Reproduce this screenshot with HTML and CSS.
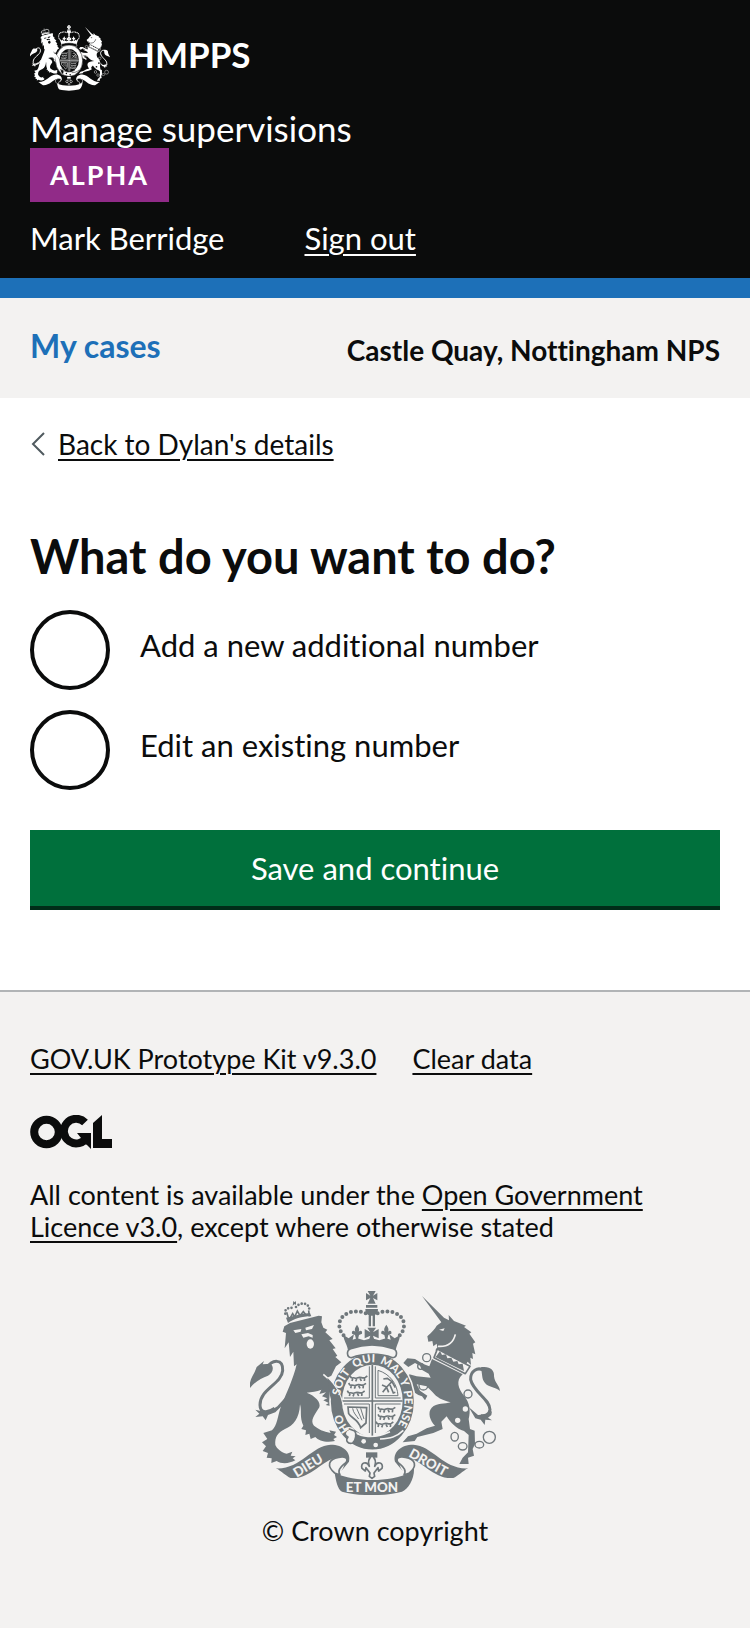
FILE: index.html
```html
<!DOCTYPE html>
<html lang="en">
<head>
<meta charset="utf-8">
<meta name="viewport" content="width=device-width, initial-scale=1">
<title>What do you want to do? - Manage supervisions</title>
<link rel="stylesheet" href="styles.css">
</head>
<body>
<svg class="sprite" aria-hidden="true">
  <defs>
    <g id="ribbon-side">
      <path class="ink" d="M108 568C180 572 215 500 272 497C310 497 334 520 327 548L304 576C322 550 314 532 290 536C248 542 210 602 152 597C138 592 124 576 108 568Z"/>
      <path class="outline" d="M296 535C264 540 260 562 284 582L300 588C290 570 306 562 318 550C326 540 316 530 296 535Z"/>
    </g>
    <g id="crown-half">
      <path class="pearls" d="M377 103C342 88 298 104 298 138C298 152 304 162 314 172"/>
      <path class="ink" d="M351 137C358 147 359 152 356 158C362 152 368 156 366 164L357 168L354 180H348L345 168L336 164C334 156 340 152 346 158C343 152 344 147 351 137Z"/>
    </g>
    <g id="passant">
      <path class="line bold" d="M0 4C8-2 12 8 20 2C28-2 34 6 42 1L48 -3M4 5L2 12M16 6L13 13M26 4L30 12M40 4L39 12M0 3L-4 -4"/>
    </g>
    <symbol id="crest" viewBox="30 36 750 612">
      <!-- royal crown -->
      <path class="ink" d="M383 36H407L399 50L412 42V64L399 57L407 74H383L391 57L378 64V42L391 50Z"/>
      <path class="ink" d="M378 78H412V86H378ZM376 90H414C414 106 404 110 395 110S376 106 376 90ZM386 108H393V142H386ZM398 108H405V142H398Z"/>
      <path class="ink" d="M382 146H408L399 160L416 150V178L399 170L404 186H386L391 170L374 178V150L391 160Z"/>
      <use href="#crown-half"/>
      <use href="#crown-half" transform="matrix(-1 0 0 1 790 0)"/>
      <path class="ink" d="M310 168L326 178L342 166L338 182L352 178L372 184L395 178L418 184L438 178L452 182L448 166L464 178L480 168C478 188 472 192 467 214C420 200 370 200 324 214C320 192 312 188 310 168Z"/>
      <!-- lion -->
      <path class="ink" d="M133 142L150 132L236 110L246 112L244 130L250 146L262 152L256 160L278 180L268 184L287 208L278 210L292 230L286 234L304 250L288 262L274 290L262 296C288 320 302 345 306 372L300 393L288 384L284 394L270 390L275 382L257 378L266 372L250 364L262 358L246 352L258 340L238 345L244 332C230 338 215 338 200 341C225 350 244 370 238 385C222 410 210 425 222 440C234 450 250 458 272 462L268 454L288 458L282 468L291 474L280 480L285 486C260 492 236 486 226 474L212 480L208 464L196 468L198 454L184 450L190 440C178 415 186 395 180 376C178 420 160 440 135 450C112 462 104 475 106 498C110 508 125 522 140 524L157 518L152 530L167 532L158 538L166 544C148 554 125 556 110 546L94 552L95 538L80 536L84 522L68 516L78 502L66 490L82 480L70 462L96 454C112 440 112 415 122 385C140 340 160 300 170 256L162 262L160 218L150 234L146 190L134 208L138 162L128 158Z"/>
      <path class="ground" d="M160 154L184 150L182 158L166 162ZM196 146L222 138L216 150L198 154ZM184 166L204 162L218 168L218 176L206 172L190 176Z"/>
      <ellipse class="ground" cx="211" cy="195" rx="11" ry="14"/>
      <path class="gap" d="M250 286C275 306 292 325 300 352"/>
      <path class="ink" d="M30 327C26 300 42 290 50 264L72 246L68 256L92 254C104 264 98 284 84 290C64 298 44 308 30 327ZM46 392L62 396L80 402L112 382L135 356L134 372L106 400L84 408L77 424L68 412L46 414L58 404Z"/>
      <path class="tail" d="M80 268C96 240 130 238 128 275C125 315 60 330 60 378C60 404 84 402 104 388"/>
      <path class="line bold" d="M140 100L148 126M206 94L208 112M150 118L158 104L164 114L172 96L180 110L190 98L198 108"/>
      <path class="pearls small" d="M136 104C132 88 150 84 162 88M168 84C176 72 206 66 208 92"/>
      <path class="ink" d="M160 66L164 70L168 66V78L164 75L158 80ZM138 116C160 112 184 104 210 102L214 112C186 112 160 120 144 132Z"/>
      <!-- unicorn -->
      <path class="ink" d="M546 51L612 116L627 124L626 108L642 126L678 140L672 144L694 160L688 164L706 190L699 194L706 226L697 222L699 240L691 236L693 258L683 248L674 262L586 214L592 205L590 194L580 202L577 186L565 188L562 172C575 160 585 150 590 140L604 130Z"/>
      <path class="gap" d="M594 202C622 204 640 192 646 166"/>
      <path class="ground" d="M597 152L614 148L610 156Z"/>
      <path class="outline" d="M592 210L690 262L676 284L582 236Z"/>
      <path class="ink" d="M590 230L600 216L606 228L618 226L622 238L634 236L640 248L652 246L656 256L668 254L672 276L586 234Z"/>
      <path class="ink" d="M576 240L668 286C646 305 655 330 672 350C690 372 692 395 686 420L690 450L704 455L705 495L698 510L702 530L684 536L686 555H658L668 536L684 520L686 468L672 456C650 450 630 430 620 412L604 428L608 450L580 462L532 474L524 486L488 490L504 472L530 464L560 448L585 440C570 425 562 400 575 386C590 372 615 375 632 370C606 364 590 355 578 340L560 322L530 316L540 335L562 350L555 364L546 352L535 348L522 340L505 305L508 286L530 292L572 296L566 284L545 272L540 260L525 252L505 264L490 252L502 238L525 240L548 254L568 262Z"/>
      <path class="ink" d="M722 265C748 260 764 272 762 292C764 312 778 318 780 336C765 322 745 326 735 312C724 300 728 285 722 265ZM686 384L714 408L744 406L756 396L754 408L744 416L756 424L736 422L734 438L722 422L706 418Z"/>
      <path class="tail" d="M738 278C712 258 690 278 692 302C700 340 750 360 750 392C748 408 734 412 722 410"/>
      <g class="chain">
        <circle cx="560" cy="236" r="12"/><circle cx="542" cy="262" r="9"/><circle cx="550" cy="320" r="13"/>
        <circle cx="684" cy="345" r="12"/><ellipse cx="644" cy="473" rx="11" ry="13"/>
        <ellipse cx="668" cy="502" rx="13" ry="11"/><ellipse cx="718" cy="497" rx="13" ry="10"/><circle cx="748" cy="475" r="18"/>
      </g>
      <circle class="ground" cx="676" cy="390" r="8"/><circle class="ground" cx="653" cy="424" r="8"/>
      <!-- garter and shield -->
      <ellipse class="ring" cx="397" cy="367" rx="127" ry="147"/>
      <ellipse class="ground" cx="397" cy="365" rx="91" ry="108"/>
      <path class="line bold" d="M397 258V472M306 366H488"/>
      <path class="line" d="M388 262V357H312M406 262V357H482M388 462V375H312M406 462V375H482"/>
      <use href="#passant" x="334" y="294"/><use href="#passant" x="330" y="316"/><use href="#passant" x="326" y="339"/>
      <use href="#passant" x="418" y="388"/><use href="#passant" x="418" y="410"/><use href="#passant" x="412" y="432"/>
      <path class="line" d="M414 274V350H474C472 315 450 285 414 274Z"/>
      <path class="line bold" d="M428 340L440 324L426 318M440 324L456 308L442 298L430 300M456 308L466 326M450 318L460 342L466 340M440 326L446 340"/>
      <path class="line bold" d="M324 384L380 386L378 432L362 446C354 420 334 418 326 404Z"/>
      <path class="line" d="M338 388C340 402 348 408 356 420M350 388L366 424M362 388L372 420"/>
      <path class="gap" d="M312 452C326 442 340 448 342 458C365 472 395 482 450 458M420 480C450 478 470 474 490 454"/>
      <path class="outline" d="M328 450C312 456 312 470 324 474C316 484 322 496 338 492C348 484 350 462 344 456Z"/>
      <circle class="ground" cx="371" cy="487" r="7"/><circle class="ground" cx="407" cy="498" r="7"/>
      <path class="outline" d="M332 209C372 195 420 195 460 209C474 214 472 236 458 236C420 222 372 222 334 236C320 236 318 214 332 209Z"/>
      <path class="gap" d="M262 296C286 318 302 345 308 376"/>
      <path class="ink" d="M262 296C286 320 302 345 306 372L298 396L288 384L280 388L270 350Z"/>
      <!-- ribbon -->
      <use href="#ribbon-side"/>
      <use href="#ribbon-side" transform="matrix(-1 0 0 1 792 0)"/>
      <path class="ink" d="M284 582C345 610 450 610 508 582L522 566C524 600 504 632 486 638C430 652 360 652 306 638C292 630 288 605 284 582Z"/>
      <path class="ink" d="M378 520H412V536H378Z"/>
      <path class="outline" d="M396 530C410 542 408 552 404 562C412 544 432 552 426 568L416 576L414 566L402 582L404 592L396 598L388 592L390 582L378 566L376 576L366 568C360 552 380 544 388 562C384 552 382 542 396 530Z"/>
    </symbol>
  </defs>
</svg>

<header class="header">
  <a class="brand" href="#">
    <svg class="brand-crest" aria-hidden="true"><use href="#crest"/></svg>
    <span>HMPPS</span>
  </a>
  <a class="service" href="#">Manage supervisions</a>
  <strong class="tag">ALPHA</strong>
  <div class="account">
    <span>Mark Berridge</span>
    <a href="#">Sign out</a>
  </div>
</header>

<nav class="subnav" aria-label="Primary">
  <a class="subnav-link" href="#">My cases</a>
  <span class="location">Castle Quay, Nottingham NPS</span>
</nav>

<main class="main">
  <a class="back" href="#">
    <svg class="chevron" viewBox="0 0 14 24" aria-hidden="true"><path d="M13 1L2 12L13 23"/></svg>
    <span>Back to Dylan's details</span>
  </a>
  <form class="form" action="#">
    <fieldset class="choices">
      <legend>What do you want to do?</legend>
      <div class="choice">
        <input type="radio" name="action" id="add" value="add">
        <label for="add">Add a new additional number</label>
      </div>
      <div class="choice">
        <input type="radio" name="action" id="edit" value="edit">
        <label for="edit">Edit an existing number</label>
      </div>
    </fieldset>
    <button class="submit" type="submit">Save and continue</button>
  </form>
</main>

<footer class="footer">
  <div class="footer-links">
    <a href="#">GOV.UK Prototype Kit v9.3.0</a>
    <a href="#">Clear data</a>
  </div>
  <svg class="ogl" viewBox="0 0 82 34" role="img" aria-label="Open Government Licence">
    <circle cx="16.5" cy="17" r="12.3"/>
    <path d="M55 7.5A12.3 12.3 0 1 0 57 22"/>
    <path class="solid" d="M47 18H61V34L57 30L50 26L51 23Z"/>
    <path class="solid" d="M63 8L72 0V24H82V33H63Z"/>
  </svg>
  <p class="licence">All content is available under the <a href="#">Open Government Licence v3.0</a>, except where otherwise stated</p>
  <a class="copyright" href="#">
    <svg class="arms" viewBox="30 36 750 612" aria-hidden="true">
      <defs>
        <path id="motto" d="M300 382A97 117 0 1 1 436 474"/>
        <path id="motto-start" d="M330 454A97 117 0 0 1 300 367"/>
      </defs>
      <use href="#crest" x="30" y="36" width="750" height="612"/>
      <g class="motto">
        <text><textPath href="#motto-start" startOffset="2">HO</textPath></text>
        <text><textPath href="#motto" startOffset="32">SOIT</textPath></text>
        <text><textPath href="#motto" startOffset="128">QUI</textPath></text>
        <text><textPath href="#motto" startOffset="206">MAL</textPath></text>
        <text><textPath href="#motto" startOffset="286">Y</textPath></text>
        <text><textPath href="#motto" startOffset="320">PENSE</textPath></text>
      </g>
      <g class="motto large">
        <text transform="translate(170 596) rotate(-31)">DIEU</text>
        <text transform="translate(504 532) rotate(29)">DROIT</text>
        <text x="396" y="639" text-anchor="middle">ET MON</text>
      </g>
    </svg>
    <span>© Crown copyright</span>
  </a>
</footer>
</body>
</html>
```

FILE: styles.css
```css
* {
  box-sizing: border-box;
}

body {
  --ground: #f3f2f1;
  margin: 0;
  min-height: 100vh;
  display: flex;
  flex-direction: column;
  background: #f3f2f1;
  color: #0b0c0c;
  font-family: Lato, "Noto Sans", sans-serif;
  font-size: 31px;
  font-variant-ligatures: none;
  line-height: 40px;
}

a {
  color: inherit;
  text-decoration-thickness: 2px;
  text-underline-offset: 4px;
}

.sprite {
  position: absolute;
  width: 0;
  height: 0;
}

/* Crest artwork: drawn in the text colour over --ground */
.ink { fill: currentColor; }
.ground { fill: var(--ground); }
.ring { fill: currentColor; stroke: var(--ground); stroke-width: 5; }
.outline { fill: var(--ground); stroke: currentColor; stroke-width: 5; stroke-linejoin: round; }
.line { fill: none; stroke: currentColor; stroke-width: 3; }
.line.bold { stroke-width: 5; }
.gap { fill: none; stroke: var(--ground); stroke-width: 5; }
.tail { fill: none; stroke: currentColor; stroke-width: 9; }
.pearls { fill: none; stroke: currentColor; stroke-width: 12; stroke-linecap: round; stroke-dasharray: 0 15; }
.pearls.small { stroke-width: 8; stroke-dasharray: 0 10; }
.chain { fill: none; stroke: currentColor; stroke-width: 4; }

.header {
  --ground: #0b0c0c;
  display: flex;
  flex-direction: column;
  align-items: flex-start;
  padding: 24px 30px 20px;
  border-bottom: 20px solid #1d70b8;
  background: #0b0c0c;
  color: #fff;
}

.brand {
  display: flex;
  align-items: flex-start;
  gap: 18px;
  margin-bottom: 16px;
  font-size: 35px;
  font-weight: 700;
  line-height: 60px;
  text-decoration: none;
}

.brand-crest {
  width: 80px;
  height: 68px;
}

.service {
  font-size: 35px;
  text-decoration: none;
}

.tag {
  padding: 7px 20px;
  background: #912b88;
  font-size: 27px;
  font-weight: 700;
  letter-spacing: 2px;
}

.account {
  display: flex;
  gap: 80px;
  margin-top: 16px;
}

.subnav {
  display: flex;
  justify-content: space-between;
  padding: 28px 30px;
  font-weight: 700;
}

.subnav-link {
  color: #1d70b8;
  font-size: 32px;
  text-decoration: none;
}

.location {
  padding-top: 4px;
  font-size: 28px;
}

.main {
  padding: 30px 30px 80px;
  background: #fff;
}

.back {
  display: flex;
  align-items: center;
  gap: 12px;
  width: fit-content;
  font-size: 28px;
  line-height: 32px;
  text-decoration: none;
}

.back span {
  text-decoration: underline;
  text-decoration-thickness: 2px;
}

.chevron {
  width: 16px;
  height: 24px;
  fill: none;
  stroke: #505a5f;
  stroke-width: 2;
}

.form {
  margin-top: 68px;
}

.choices {
  display: grid;
  gap: 20px;
  margin: 0;
  padding: 0;
  border: 0;
}

.choices legend {
  margin-bottom: 26px;
  padding: 0;
  font-size: 47px;
  font-weight: 700;
  line-height: 56px;
}

.choice {
  display: flex;
  gap: 30px;
}

.choice input {
  appearance: none;
  flex: none;
  width: 80px;
  height: 80px;
  margin: 0;
  border: 4px solid #0b0c0c;
  border-radius: 50%;
  background: #fff;
}

.choice input:checked {
  background: radial-gradient(#0b0c0c 20px, #fff 21px);
}

.choice label {
  padding-top: 15px;
}

.submit {
  display: block;
  width: 100%;
  margin-top: 40px;
  padding: 20px;
  border: 0;
  border-bottom: 4px solid #002d18;
  background: #00703c;
  color: #fff;
  font: inherit;
  line-height: 36px;
}

.footer {
  flex: 1;
  padding: 51px 30px;
  border-top: 2px solid #b1b4b6;
  font-size: 27px;
  line-height: 32px;
}

.footer-links {
  display: flex;
  gap: 36px;
}

.ogl {
  display: block;
  width: 82px;
  height: 34px;
  margin: 40px 0 30px;
  fill: none;
  stroke: #0b0c0c;
  stroke-width: 8;
}

.solid {
  fill: #0b0c0c;
  stroke: none;
}

.licence {
  margin: 0 0 48px;
}

.copyright {
  display: flex;
  flex-direction: column;
  align-items: center;
  gap: 20px;
  text-decoration: none;
}

.arms {
  width: 250px;
  height: 204px;
  color: #6f777b;
}

.motto {
  fill: #f3f2f1;
  font-size: 34px;
  font-weight: 900;
}

.large {
  font-size: 40px;
}
```
